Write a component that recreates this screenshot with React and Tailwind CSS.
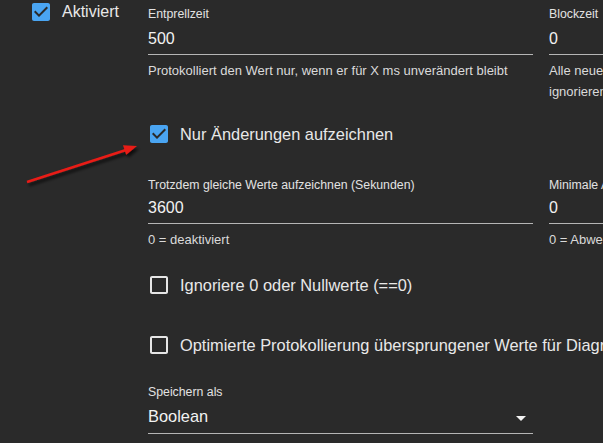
import React from 'react';

const font = { fontFamily: '"Liberation Sans", Arial, sans-serif' };

function CheckIcon({ checked }) {
  return (
    <svg width="24" height="24" viewBox="0 0 24 24" className="shrink-0">
      {checked ? (
        <path
          fill="#4aa5f2"
          d="M19 3H5c-1.11 0-2 .9-2 2v14c0 1.1.89 2 2 2h14c1.11 0 2-.9 2-2V5c0-1.1-.89-2-2-2zm-9 14l-5-5 1.41-1.41L10 14.17l7.59-7.59L19 8l-9 9z"
        />
      ) : (
        <path
          fill="#e6e6e6"
          d="M19 5v14H5V5h14m0-2H5c-1.1 0-2 .9-2 2v14c0 1.1.9 2 2 2h14c1.1 0 2-.9 2-2V5c0-1.1-.9-2-2-2z"
        />
      )}
    </svg>
  );
}

function CheckRow({ checked, label, className }) {
  return (
    <div className={'flex items-center h-[42px] ' + className}>
      <div className="-ml-[1px]">
        <CheckIcon checked={checked} />
      </div>
      <span className="ml-[9px] text-[16.4px] leading-5 text-[#e8e8e8] whitespace-nowrap">{label}</span>
    </div>
  );
}

function Field({ label, value, helper, gap }) {
  return (
    <div className="w-[385px] shrink-0">
      <div className="pt-[6px] text-[12.3px] leading-4 text-[#e2e2e2] whitespace-nowrap">{label}</div>
      <div className={'pb-[5px] text-[16px] leading-5 text-[#f2f2f2] border-b border-[#b5b5b5] ' + gap}>
        {value}
      </div>
      <div className="mt-[5px] text-[13px] leading-[21px] text-[#dadada]">{helper}</div>
    </div>
  );
}

export default function App() {
  return (
    <div className="relative w-[603px] h-[443px] overflow-hidden bg-[#2a2a2a]" style={font}>
      <div className="flex">
        {/* left column */}
        <div className="w-[148px] shrink-0">
          <div className="flex items-center h-[24px] pl-[29px]">
            <CheckIcon checked />
            <span className="ml-[9px] text-[16px] leading-5 text-[#e8e8e8] -mt-[1px]">Aktiviert</span>
          </div>
        </div>

        {/* right column */}
        <div className="flex-1 min-w-0 flex flex-col">
          <div className="flex gap-4">
            <Field
              label="Entprellzeit"
              value="500"
              helper="Protokolliert den Wert nur, wenn er für X ms unverändert bleibt"
              gap="mt-[7px]"
            />
            <Field
              label="Blockzeit"
              value="0"
              helper="Alle neuen Werte für X ms nach dem letzten protokollierten Wert ignorieren"
              gap="mt-[7px]"
            />
          </div>

          <CheckRow checked label="Nur Änderungen aufzeichnen" className="mt-[11px]" />

          <div className="flex gap-4 mt-[16px]">
            <Field
              label="Trotzdem gleiche Werte aufzeichnen (Sekunden)"
              value="3600"
              helper="0 = deaktiviert"
              gap="mt-[5px]"
            />
            <Field
              label="Minimale Abweichung vom letzten Wert"
              value="0"
              helper="0 = Abweichungsprüfung deaktiviert"
              gap="mt-[5px]"
            />
          </div>

          <CheckRow checked={false} label="Ignoriere 0 oder Nullwerte (==0)" className="mt-[14px]" />
          <CheckRow
            checked={false}
            label="Optimierte Protokollierung übersprungener Werte für Diagramme"
            className="mt-[18px]"
          />

          <div className="w-[385px] mt-[12px]">
            <div className="pt-[6px] text-[12.3px] leading-4 text-[#e2e2e2]">Speichern als</div>
            <div className="relative mt-[6px] pb-[7px] text-[16.4px] leading-5 text-[#f2f2f2] border-b border-[#b5b5b5]">
              Boolean
              <svg width="24" height="24" viewBox="0 0 24 24" className="absolute right-0 top-0">
                <path fill="#f2f2f2" d="M7 10l5 5 5-5z" />
              </svg>
            </div>
          </div>
        </div>
      </div>

      {/* red annotation arrow */}
      <svg className="absolute left-0 top-0 pointer-events-none" width="603" height="443">
        <defs>
          <filter id="sh" x="-20%" y="-50%" width="140%" height="200%">
            <feDropShadow dx="2" dy="3" stdDeviation="1.5" floodColor="#000" floodOpacity="0.7" />
          </filter>
        </defs>
        <g filter="url(#sh)">
          <line x1="27" y1="182" x2="126" y2="150" stroke="#e81b16" strokeWidth="2.5" />
          <polygon points="137,146 126.2,154.8 123,145.2" fill="#e81b16" />
        </g>
      </svg>
    </div>
  );
}
